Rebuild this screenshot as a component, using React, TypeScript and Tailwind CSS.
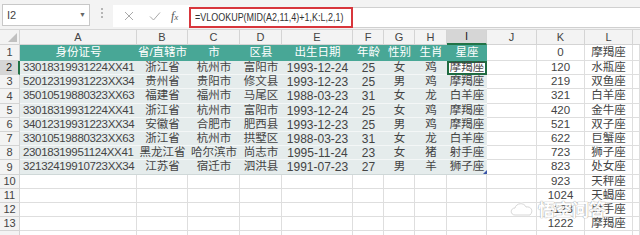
import React from 'react';

const W = [20, 117, 51, 52, 42, 71, 31, 31, 32, 40, 50, 48, 48];
const LETTERS = ['A', 'B', 'C', 'D', 'E', 'F', 'G', 'H', 'I', 'J', 'K', 'L', ''];
const HEIGHTS = [16, 14, 14, 15, 14, 14, 14, 14, 15, 14, 14, 14, 14, 6];

const HEAD = ['身份证号', '省/直辖市', '市', '区县', '出生日期', '年龄', '性别', '生肖', '星座'];

const DATA = [
  ['33018319931224XX41', '浙江省', '杭州市', '富阳市', '1993-12-24', '25', '女', '鸡', '摩羯座'],
  ['52012319931223XX34', '贵州省', '贵阳市', '修文县', '1993-12-23', '25', '男', '鸡', '摩羯座'],
  ['35010519880323XX63', '福建省', '福州市', '马尾区', '1988-03-23', '31', '女', '龙', '白羊座'],
  ['33018319931224XX41', '浙江省', '杭州市', '富阳市', '1993-12-24', '25', '女', '鸡', '摩羯座'],
  ['34012319931223XX34', '安徽省', '合肥市', '肥西县', '1993-12-23', '25', '男', '鸡', '摩羯座'],
  ['33010519880323XX63', '浙江省', '杭州市', '拱墅区', '1988-03-23', '31', '女', '龙', '白羊座'],
  ['23018319951124XX41', '黑龙江省', '哈尔滨市', '尚志市', '1995-11-24', '23', '女', '猪', '射手座'],
  ['32132419910723XX34', '江苏省', '宿迁市', '泗洪县', '1991-07-23', '27', '男', '羊', '狮子座'],
];

const LOOKUP: Array<[string, string]> = [
  ['0', '摩羯座'], ['120', '水瓶座'], ['219', '双鱼座'], ['321', '白羊座'], ['420', '金牛座'],
  ['521', '双子座'], ['622', '巨蟹座'], ['723', '狮子座'], ['823', '处女座'], ['923', '天秤座'],
  ['1024', '天蝎座'], ['1123', '射手座'], ['1222', '摩羯座'],
];

const FONT = { fontFamily: '"Liberation Sans", "Noto Sans CJK SC", sans-serif' };

function Toolbar() {
  return (
    <div className="flex h-[30px] items-start border-b border-[#d6d6d6] bg-[#f3f3f3]">
      <div className="ml-[2px] mt-[4px] flex h-[22px] w-[88px] items-center justify-between border border-[#c8c8c8] bg-white pl-[4px] pr-[3px]">
        <span className="text-[11px] text-[#444]">I2</span>
        <span className="text-[7px] text-[#666]">▼</span>
      </div>
      <div className="mt-[8px] flex w-[23px] flex-col items-center gap-[2px]">
        <span className="h-[2px] w-[2px] bg-[#b5b5b5]" />
        <span className="h-[2px] w-[2px] bg-[#b5b5b5]" />
        <span className="h-[2px] w-[2px] bg-[#b5b5b5]" />
      </div>
      <div className="mt-[5px] flex h-[22px] w-[77px] items-center bg-white">
        <svg width="26" height="12" viewBox="0 0 26 12" className="ml-[3px]">
          <path d="M9 2 L17 10 M17 2 L9 10" stroke="#a9a9a9" strokeWidth="1" fill="none" />
        </svg>
        <svg width="26" height="12" viewBox="0 0 26 12">
          <path d="M8 6.5 L11.5 10 L18 2.5" stroke="#a9a9a9" strokeWidth="1" fill="none" />
        </svg>
        <span className="ml-[3px] text-[12px] italic text-[#555]" style={{ fontFamily: '"Liberation Serif", serif' }}>
          f<span className="text-[9px]">x</span>
        </span>
      </div>
      <div className="mt-[7px] flex h-[21px] flex-1 items-center border-y border-[#d0d0d0] bg-white">
        <div className="-ml-px flex h-[21px] w-[164px] items-center overflow-hidden border-2 border-[#d8363c] pl-[4px]">
          <span className="origin-left scale-x-[0.78] whitespace-nowrap text-[11.5px] text-[#333]">
            =VLOOKUP(MID(A2,11,4)+1,K:L,2,1)
          </span>
        </div>
      </div>
    </div>
  );
}

function ColumnHeader() {
  return (
    <div className="flex h-[15px] bg-[#f3f3f3] text-[11px] text-[#444]">
      <div className="relative shrink-0 border-b border-r border-[#d4d4d4]" style={{ width: W[0] }}>
        <span className="absolute bottom-[2px] right-[2px] h-0 w-0 border-b-[9px] border-l-[9px] border-b-[#c0c0c0] border-l-transparent" />
      </div>
      {LETTERS.map((l, i) =>
        i === 12 ? (
          <div key="m" className="flex-1 border-b border-[#d4d4d4]" />
        ) : (
          <div
            key={l}
            className={
              i === 8
                ? 'flex shrink-0 items-center justify-center border-b-2 border-r border-b-[#217346] border-r-[#d4d4d4] bg-[#d6d6d6] text-[#222]'
                : 'flex shrink-0 items-center justify-center border-b border-r border-[#d4d4d4]'
            }
            style={{ width: W[i + 1] }}
          >
            {l}
          </div>
        ),
      )}
    </div>
  );
}

function cellClass(r: number, c: number): string {
  const base = 'flex shrink-0 items-center overflow-hidden whitespace-nowrap';
  const inTable = r <= 9 && c < 9;
  if (inTable && r === 1) {
    return `${base} justify-center bg-[#48a796] text-[11.5px] text-white`;
  }
  if (inTable) {
    const size =
      c === 0 ? 'text-[11.5px] tracking-[-0.35px]' : c === 4 || c === 5 ? 'text-[12px]' : 'text-[11.5px]';
    const align = c === 0 ? 'justify-start pl-[3px]' : 'justify-center';
    if (r === 2 && c === 8) {
      return `${base} ${align} ${size} bg-white text-[#444] shadow-[inset_0_0_0_2px_#1f6b41]`;
    }
    const line = r === 9 ? 'border-[#cfd8d8]' : 'border-[#f4f7f7]';
    return `${base} ${align} ${size} border-b ${line} bg-[#e5ecec] text-[#444]`;
  }
  const size = c === 10 ? 'text-[11.5px]' : 'text-[11.5px]';
  return `${base} justify-center ${size} border-b border-r border-[#dedede] text-[#444]`;
}

function SheetRow({ r, h }: { r: number; h: number }) {
  const cells: React.ReactNode[] = [];

  for (let c = 0; c < 13; c++) {
    let text = '';
    if (r <= 9 && c < 9) text = r === 1 ? HEAD[c] : DATA[r - 2][c];
    if (r <= 13 && c === 10) text = LOOKUP[r - 1][0];
    if (r <= 13 && c === 11) text = LOOKUP[r - 1][1];
    const isLast = c === 12;
    cells.push(
      <div
        key={c}
        className={cellClass(r, c) + (isLast ? ' flex-1' : '') + (r === 9 && c === 8 ? ' relative' : '')}
        style={{ width: isLast ? undefined : W[c + 1] }}
      >
        {text}
        {r === 9 && c === 8 && (
          <span className="absolute bottom-0 right-0 h-0 w-0 border-b-[4px] border-l-[4px] border-b-[#3a55a8] border-l-transparent" />
        )}
      </div>,
    );
  }

  const rowHead =
    r === 2
      ? 'flex shrink-0 items-center justify-center border-b border-r-2 border-b-[#d4d4d4] border-r-[#217346] bg-[#d6d6d6] text-[11px] text-[#222]'
      : 'flex shrink-0 items-center justify-center border-b border-r border-[#d4d4d4] bg-[#f3f3f3] text-[11px] text-[#444]';

  return (
    <div className="flex" style={{ height: h }}>
      <div className={rowHead} style={{ width: W[0] }}>
        {r <= 13 ? r : ''}
      </div>
      {cells}
    </div>
  );
}

export default function App() {
  return (
    <div className="relative h-[235px] w-[640px] overflow-hidden bg-white" style={FONT}>
      <Toolbar />
      <ColumnHeader />
      {HEIGHTS.map((h, i) => (
        <SheetRow key={i} r={i + 1} h={h} />
      ))}
      {/* watermark */}
      <div className="pointer-events-none absolute left-[508px] top-[196px] flex items-center gap-[2px] opacity-90">
        <svg width="28" height="20" viewBox="0 0 28 20">
          <path
            d="M7 16 C2 16 2 9 7 9 C8 4 16 3 18 8 C23 7 26 12 22 16 Z"
            fill="none"
            stroke="#ffffff"
            strokeWidth="2.2"
          />
          <path d="M7 16 C2 16 2 9 7 9 C8 4 16 3 18 8 C23 7 26 12 22 16 Z" fill="none" stroke="#c8c8c8" strokeWidth="0.8" />
        </svg>
        <span
          className="text-[17px] font-bold text-white"
          style={{ textShadow: '0 0 1px #9a9a9a, 0 0 1px #9a9a9a', fontFamily: '"Noto Sans CJK SC", sans-serif' }}
        >
          悟空问答
        </span>
      </div>
    </div>
  );
}
